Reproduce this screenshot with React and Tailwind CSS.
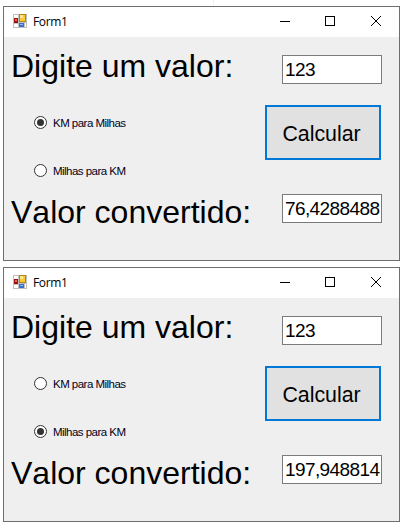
function FormIcon() {
  return (
    <svg width="14" height="14" viewBox="0 0 14 14" shapeRendering="crispEdges">
      <rect width="14" height="14" fill="#c0c0c0" />
      <rect x="1" y="1" width="4" height="3" fill="#fff" />
      <rect x="1" y="10" width="4" height="3" fill="#fff" />
      <rect x="12" y="9" width="1" height="4" fill="#fff" />
      <rect x="1" y="4" width="4" height="5" fill="#a01010" />
      <rect x="2" y="5" width="2" height="2" fill="#e06a50" />
      <rect x="6" y="0" width="7" height="8" fill="#b8860b" />
      <rect x="7" y="1" width="5" height="6" fill="#fcc83c" />
      <rect x="7" y="1" width="3" height="3" fill="#ffe48a" />
      <rect x="6" y="9" width="5" height="4" fill="#3a6fd0" />
      <rect x="7" y="10" width="3" height="1" fill="#8fb8f8" />
    </svg>
  );
}

function TitleBar() {
  return (
    <div className="flex h-[30px] items-start bg-white pl-[9px]">
      <div className="pt-[7px]">
        <FormIcon />
      </div>
      <span className="ml-[6px] mt-[6px] font-['Open_Sans',sans-serif] text-[12px] leading-[17px] tracking-[-0.35px] text-black">
        Form1
      </span>
      <svg className="ml-auto mr-[18px] mt-[9px]" width="101" height="10" viewBox="0 0 101 10" fill="none" stroke="#000">
        <path d="M0 5.5h10" shapeRendering="crispEdges" />
        <rect x="45.5" y="0.5" width="9" height="9" shapeRendering="crispEdges" />
        <path d="M91 0l10 10M101 0L91 10" />
      </svg>
    </div>
  );
}

function Radio({ checked, children }) {
  return (
    <div className="flex h-[13px] items-center gap-[6px] pl-[30px]">
      <span className="flex size-[13px] items-center justify-center rounded-full border border-[#333] bg-white">
        {checked && <span className="size-[7px] rounded-full bg-[#333]" />}
      </span>
      <span className="whitespace-nowrap pt-[2px] text-[11.5px] leading-[13px] tracking-[-0.53px] text-[#00001c]">{children}</span>
    </div>
  );
}

function TextBox({ children }) {
  return (
    <div className="ml-[17px] h-[29px] w-[100px] overflow-hidden border border-[#7a7a7a] bg-white pl-[2px] text-[19px] leading-[28px] tracking-[-0.6px]">
      {children}
    </div>
  );
}

function Heading({ children }) {
  return <div className="h-[36px] whitespace-nowrap pl-[7px] text-[32px] leading-[36px]">{children}</div>;
}

function FormWindow({ kmToMiles, result }) {
  return (
    <section className="h-[255px] w-[397px] border border-[#6e6e6e] bg-[#efefef]">
      <TitleBar />
      <div className="flex">
        <div className="w-[261px] pt-[11px]">
          <Heading>Digite um valor:</Heading>
          <div className="mb-[17px] mt-[32px] flex flex-col gap-[35px]">
            <Radio checked={kmToMiles}>KM para Milhas</Radio>
            <Radio checked={!kmToMiles}>Milhas para KM</Radio>
          </div>
          <Heading>Valor convertido:</Heading>
        </div>
        <div className="w-[117px] pt-[18px]">
          <TextBox>123</TextBox>
          <button className="mb-[34px] mt-[21px] block h-[55px] w-[116px] border-2 border-[#0078d7] bg-[#e1e1e1] pr-[3px] text-center text-[21.33px] leading-[51px] pt-[2px]">
            Calcular
          </button>
          <TextBox>{result}</TextBox>
        </div>
      </div>
    </section>
  );
}

export default function App() {
  return (
    <main className="flex h-[532px] w-[408px] flex-col gap-[6px] bg-white pl-[3px] font-['Liberation_Sans',Arial,sans-serif] text-black [font-kerning:none]">
      <div className="-mb-[6px] ml-[210px] h-[6px] w-px bg-[#f0f0f0]" />
      <FormWindow kmToMiles result="76,4288488" />
      <FormWindow kmToMiles={false} result="197,948814" />
    </main>
  );
}
